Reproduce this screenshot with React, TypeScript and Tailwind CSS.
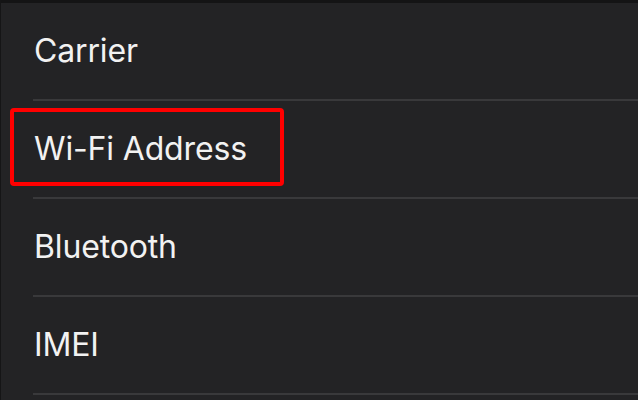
import React from "react";

const rows = ["Carrier", "Wi-Fi Address", "Bluetooth", "IMEI"];

export default function App() {
  return (
    <div
      className="relative w-[638px] h-[400px] overflow-hidden bg-[#232325] border-l border-[#151516]"
      style={{ fontFamily: "Inter, 'Noto Sans', sans-serif" }}
    >
      <div className="h-[3px] bg-[#141415]" />
      {rows.map((r, i) => (
        <div key={r}>
          <div className="relative h-[96px] flex items-center pl-[33px]">
            <span className="text-[32px] leading-none text-[#f2f2f2] tracking-[-0.15px]">{r}</span>
            {i === 1 && (
              <div className="absolute left-[9px] top-[7px] w-[274px] h-[78px] border-[4px] border-[#ff0000] rounded-[4px]" />
            )}
          </div>
          <div className="ml-[32px] h-[2px] bg-[#39393b]" />
        </div>
      ))}
    </div>
  );
}
